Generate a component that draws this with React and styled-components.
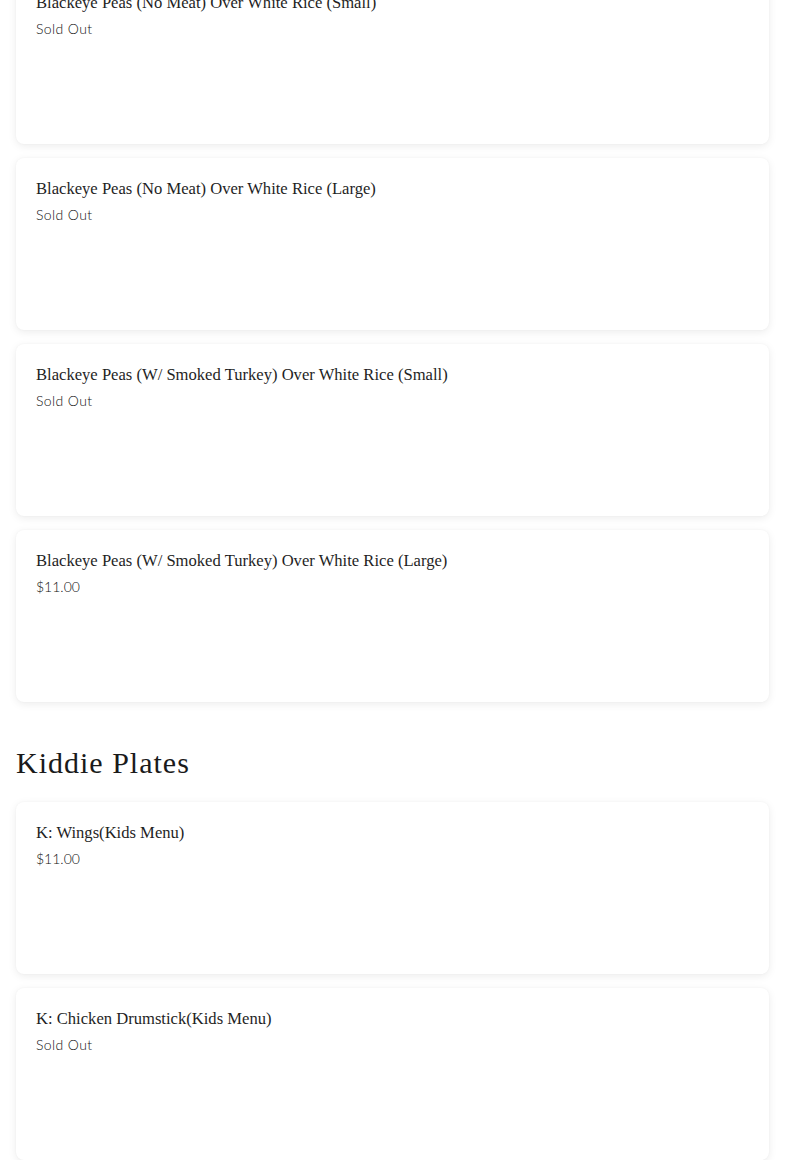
import React from 'react';
import styled, { createGlobalStyle } from 'styled-components';

const GlobalStyle = createGlobalStyle`
  html, body {
    margin: 0;
    padding: 0;
    background: #ffffff;
    overflow: hidden;
  }
`;

const Page = styled.main`
  padding: 0 16px;
  margin-top: -28px;
  display: flex;
  flex-direction: column;
`;

const CardList = styled.div`
  display: flex;
  flex-direction: column;
  gap: 14px;
`;

const Card = styled.div`
  background: #ffffff;
  border-radius: 8px;
  box-shadow: 0 2px 8px rgba(0, 0, 0, 0.08), 0 0 2px rgba(0, 0, 0, 0.04);
  height: 172px;
  box-sizing: border-box;
  padding: 19px 20px;
  display: flex;
  flex-direction: column;
`;

const Title = styled.div`
  font-family: "Liberation Serif", "DejaVu Serif", serif;
  font-size: 16.6px;
  line-height: 24px;
  color: #1f1f1f;
`;

const Price = styled.div`
  margin-top: 2px;
  font-family: Lato, "Open Sans", sans-serif;
  font-weight: 300;
  font-size: 14px;
  line-height: 24px;
  letter-spacing: ${(p) => (p.$soldOut ? '0.4px' : '0')};
  color: #111111;
`;

const SectionHeading = styled.h2`
  margin: 43px 0 21px;
  font-family: "Liberation Serif", "DejaVu Serif", serif;
  font-weight: 400;
  font-size: 30px;
  line-height: 36px;
  letter-spacing: 1px;
  color: #1a1a1a;
`;

const beans = [
  { name: 'Blackeye Peas (No Meat) Over White Rice (Small)', price: null },
  { name: 'Blackeye Peas (No Meat) Over White Rice (Large)', price: null },
  { name: 'Blackeye Peas (W/ Smoked Turkey) Over White Rice (Small)', price: null },
  { name: 'Blackeye Peas (W/ Smoked Turkey) Over White Rice (Large)', price: '$11.00' },
];

const kids = [
  { name: 'K: Wings(Kids Menu)', price: '$11.00' },
  { name: 'K: Chicken Drumstick(Kids Menu)', price: null },
];

const MenuCard = ({ item }) => (
  <Card>
    <Title>{item.name}</Title>
    <Price $soldOut={!item.price}>{item.price || 'Sold Out'}</Price>
  </Card>
);

const App = () => {
  return (
    <>
      <GlobalStyle />
      <Page>
        <CardList>
          {beans.map((item) => (
            <MenuCard key={item.name} item={item} />
          ))}
        </CardList>
        <SectionHeading>Kiddie Plates</SectionHeading>
        <CardList>
          {kids.map((item) => (
            <MenuCard key={item.name} item={item} />
          ))}
        </CardList>
      </Page>
    </>
  );
};

export default App;
